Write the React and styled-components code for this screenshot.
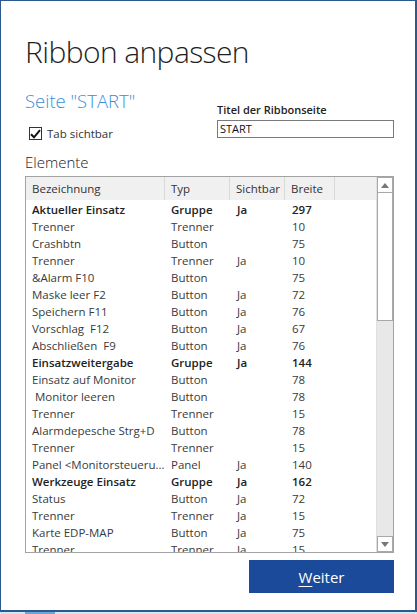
import React from "react";
import styled, { createGlobalStyle } from "styled-components";

const GlobalStyle = createGlobalStyle`
  html, body { margin: 0; padding: 0; background: #ffffff; overflow: hidden; }
  * { box-sizing: border-box; }
`;

const UI = `"Open Sans", "Noto Sans", "Liberation Sans", sans-serif`;

const Window = styled.div`
  width: 417px;
  height: 612px;
  border-left: 1px solid #2c5a8c;
  border-top: 1px solid #2c5a8c;
  border-right: 2px solid #2c5a8c;
  border-bottom: 2px solid #2c5a8c;
  background: #ffffff;
  padding: 0 21px 0 24px;
  font-family: ${UI};
  color: #333333;
  display: flex;
  flex-direction: column;
`;

const Strip = styled.div`
  height: 2px;
  display: flex;
  background: #d6e6f2;
`;

const StripTab = styled.div`
  width: ${(p) => p.$w}px;
  margin-left: ${(p) => p.$x}px;
  background: ${(p) => p.$c};
`;

const Title = styled.h1`
  margin: 29px 0 0 0;
  font-weight: 300;
  font-size: 30px;
  line-height: 44px;
  color: #1f1f1f;
  letter-spacing: -0.6px;
`;

const TopRow = styled.div`
  display: flex;
  justify-content: space-between;
  margin-top: 15px;
`;

const LeftCol = styled.div`
  display: flex;
  flex-direction: column;
`;

const PageName = styled.div`
  font-weight: 300;
  font-size: 18.5px;
  line-height: 24px;
  color: #3b8ed8;
`;

const CheckRow = styled.label`
  display: flex;
  align-items: center;
  gap: 5px;
  margin: 12px 0 0 4px;
  font-size: 11.5px;
  line-height: 17px;
  color: #333;
`;

const Box = styled.span`
  width: 13px;
  height: 13px;
  border: 1px solid #333;
  display: flex;
  align-items: center;
  justify-content: center;
  background: #fff;
`;

const RightCol = styled.div`
  display: flex;
  flex-direction: column;
  margin-top: 13px;
  width: 177px;
`;

const FieldLabel = styled.div`
  font-size: 11px;
  font-weight: 600;
  color: #222;
  line-height: 15px;
`;

const Input = styled.div`
  margin-top: 3px;
  height: 18px;
  border: 1px solid #7a7a7a;
  font-size: 11px;
  line-height: 16px;
  padding-left: 2px;
  color: #111;
`;

const Section = styled.div`
  margin-top: 10px;
  font-weight: 300;
  font-size: 15px;
  line-height: 20px;
  color: #222;
`;

const Table = styled.div`
  margin-top: 4px;
  width: 369px;
  height: 377px;
  flex-shrink: 0;
  border: 1px solid #a3a3a3;
  display: flex;
  overflow: hidden;
`;

const ListArea = styled.div`
  flex: 1;
  display: flex;
  flex-direction: column;
  overflow: hidden;
`;

const COLS = "139px 65px 55px 50px 1fr";

const HeaderRow = styled.div`
  display: grid;
  grid-template-columns: ${COLS};
  height: 23px;
  background: #f0f0f0;
  flex-shrink: 0;
`;

const HeadCell = styled.div`
  padding: 1px 0 0 ${(p) => p.$pad || 6}px;
  font-size: 11.5px;
  line-height: 22px;
  color: #333;
  border-right: ${(p) => (p.$last ? "none" : "1px solid #d9d9d9")};
`;

const Row = styled.div`
  display: grid;
  grid-template-columns: ${COLS};
  height: 17px;
  flex-shrink: 0;
  font-weight: ${(p) => (p.$group ? 600 : 400)};
  color: ${(p) => (p.$group ? "#222" : "#3a3a3a")};
`;

const Cell = styled.div`
  padding: 1px 0 0 ${(p) => p.$pad || 6}px;
  font-size: 11.5px;
  line-height: 17px;
  white-space: pre;
  overflow: hidden;
`;

const Scrollbar = styled.div`
  width: 17px;
  background: #e8e8e8;
  display: flex;
  flex-direction: column;
  border-left: 1px solid #e0e0e0;
`;

const ArrowBtn = styled.div`
  height: 16px;
  border: 1px solid #a8a8a8;
  background: #fff;
  display: flex;
  align-items: center;
  justify-content: center;
  flex-shrink: 0;
`;

const Thumb = styled.div`
  height: 128px;
  border: 1px solid #a8a8a8;
  border-top: none;
  background: #fff;
  flex-shrink: 0;
`;

const Track = styled.div`
  flex: 1;
`;

const Footer = styled.div`
  display: flex;
  justify-content: flex-end;
  margin-top: 7px;
`;

const PrimaryButton = styled.button`
  width: 145px;
  height: 33px;
  border: none;
  background: #1a4a99;
  color: #ffffff;
  font-family: ${UI};
  font-size: 15px;
  padding: 0;
`;

const Accel = styled.span`
  text-decoration: underline;
  text-underline-offset: 3px;
`;

const rows = [
  ["Aktueller Einsatz", "Gruppe", "Ja", "297", true],
  ["Trenner", "Trenner", "", "10"],
  ["Crashbtn", "Button", "", "75"],
  ["Trenner", "Trenner", "Ja", "10"],
  ["&Alarm F10", "Button", "", "75"],
  ["Maske leer F2", "Button", "Ja", "72"],
  ["Speichern F11", "Button", "Ja", "76"],
  ["Vorschlag  F12", "Button", "Ja", "67"],
  ["Abschließen  F9", "Button", "Ja", "76"],
  ["Einsatzweitergabe", "Gruppe", "Ja", "144", true],
  ["Einsatz auf Monitor", "Button", "", "78"],
  [" Monitor leeren", "Button", "", "78"],
  ["Trenner", "Trenner", "", "15"],
  ["Alarmdepesche Strg+D", "Button", "", "78"],
  ["Trenner", "Trenner", "", "15"],
  ["Panel <Monitorsteueru...", "Panel", "Ja", "140"],
  ["Werkzeuge Einsatz", "Gruppe", "Ja", "162", true],
  ["Status", "Button", "Ja", "72"],
  ["Trenner", "Trenner", "Ja", "15"],
  ["Karte EDP-MAP", "Button", "Ja", "75"],
  ["Trenner", "Trenner", "Ja", "15"],
];

const Tri = ({ up }) => (
  <svg width="8" height="5" viewBox="0 0 8 5">
    <path d={up ? "M0 5 L4 0 L8 5 Z" : "M0 0 L4 5 L8 0 Z"} fill="#777" />
  </svg>
);

export default function App() {
  return (
    <>
      <GlobalStyle />
      <Window>
        <Title>Ribbon anpassen</Title>
        <TopRow>
          <LeftCol>
            <PageName>Seite "START"</PageName>
            <CheckRow>
              <Box>
                <svg width="11" height="10" viewBox="0 0 11 10">
                  <path d="M1 5.2 L4 8.3 L10 1.2" stroke="#111" strokeWidth="2" fill="none" />
                </svg>
              </Box>
              Tab sichtbar
            </CheckRow>
          </LeftCol>
          <RightCol>
            <FieldLabel>Titel der Ribbonseite</FieldLabel>
            <Input>START</Input>
          </RightCol>
        </TopRow>
        <Section>Elemente</Section>
        <Table>
          <ListArea>
            <HeaderRow>
              <HeadCell>Bezeichnung</HeadCell>
              <HeadCell>Typ</HeadCell>
              <HeadCell>Sichtbar</HeadCell>
              <HeadCell>Breite</HeadCell>
              <HeadCell $last />
            </HeaderRow>
            {rows.map(([name, type, vis, width, group], i) => (
              <Row key={i} $group={group}>
                <Cell>{name}</Cell>
                <Cell>{type}</Cell>
                <Cell $pad={7}>{vis}</Cell>
                <Cell $pad={7}>{width}</Cell>
                <Cell />
              </Row>
            ))}
          </ListArea>
          <Scrollbar>
            <ArrowBtn><Tri up /></ArrowBtn>
            <Thumb />
            <Track />
            <ArrowBtn><Tri /></ArrowBtn>
          </Scrollbar>
        </Table>
        <Footer>
          <PrimaryButton>
            <Accel>W</Accel>eiter
          </PrimaryButton>
        </Footer>
      </Window>
      <Strip>
        <StripTab $x={25} $w={30} $c="#6fa6d6" />
      </Strip>
    </>
  );
}
